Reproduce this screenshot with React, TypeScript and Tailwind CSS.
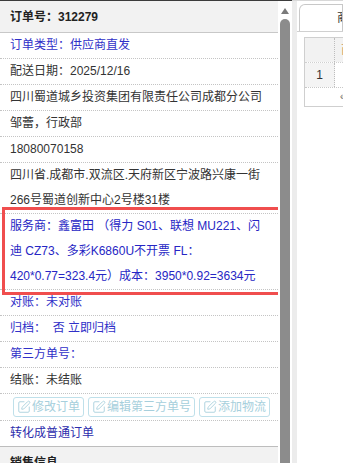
import { SquarePen } from 'lucide-react';

const rowCls = 'px-[10px] leading-[25px] border-b border-dotted border-[#c4c4c4]';

function EditButton({ label }: { label: string }) {
    return (
        <button
            disabled
            className="h-[20px] flex items-center gap-[1px] px-[3px] border border-[#bfe0ea] rounded-[3px] text-[#a6cfdc] bg-white text-[12px] leading-none"
        >
            <SquarePen size={14} strokeWidth={1.5} />
            {label}
        </button>
    );
}

export default function App() {
    return (
        <div className="w-[343px] h-[463px] overflow-hidden flex bg-white text-[12px] text-[#333] font-['Liberation_Sans','Noto_Sans_CJK_SC',sans-serif]">
            {/* order detail column + scrollbar */}
            <div className="w-[292px] shrink-0 flex border-t border-[#3c3c3c]">
                <div className="w-[278px] shrink-0 overflow-hidden">
                    <div className="h-[32px] px-[10px] flex items-center bg-[#f2f2f2] border-b border-[#c8c8c8] font-bold text-[#222]">
                        订单号：312279
                    </div>
                    <div className={`${rowCls} text-[#3030c8]`}>订单类型：供应商直发</div>
                    <div className={rowCls}>配送日期：2025/12/16</div>
                    <div className={rowCls}>四川蜀道城乡投资集团有限责任公司成都分公司</div>
                    <div className={rowCls}>邹蕾，行政部</div>
                    <div className={rowCls}>18080070158</div>
                    <div className={rowCls}>
                        四川省.成都市.双流区.天府新区宁波路兴康一街
                        <br />
                        266号蜀道创新中心2号楼31楼
                    </div>
                    <div className="relative">
                        <div className={`${rowCls} text-[#2626c4]`}>
                            服务商：鑫富田 （得力 S01、联想 MU221、闪
                            <br />
                            迪 CZ73、多彩K6860U不开票 FL：
                            <br />
                            420*0.77=323.4元）成本：3950*0.92=3634元
                        </div>
                        {/* highlight box drawn over the supplier row */}
                        <div className="absolute left-[2px] -right-[3px] -top-[7px] -bottom-[5px] border-[3px] border-[#f04e4e] pointer-events-none" />
                    </div>
                    <div className={`${rowCls} text-[#3030c8]`}>对账：未对账</div>
                    <div className={`${rowCls} text-[#3030c8] whitespace-pre`}>归档：  否 立即归档</div>
                    <div className={`${rowCls} text-[#3030c8]`}>第三方单号：</div>
                    <div className={rowCls}>结账：未结账</div>
                    <div className="flex gap-[4px] pl-[13px] pt-[3px] pb-[3px] border-b border-dotted border-[#c4c4c4]">
                        <EditButton label="修改订单" />
                        <EditButton label="编辑第三方单号" />
                        <EditButton label="添加物流" />
                    </div>
                    <div className="px-[10px] leading-[25px] text-[#2c2cac]">转化成普通订单</div>
                    <div className="h-[32px] px-[10px] flex items-center bg-[#f2f2f2] border-t border-[#bdbdbd] font-bold text-[#222]">
                        销售信息
                    </div>
                </div>
                <div className="w-[2px] shrink-0" />
                <div className="w-[10px] shrink-0 flex flex-col items-center">
                    <div className="mt-[7px] w-0 h-0 border-l-[4px] border-r-[4px] border-b-[6px] border-l-transparent border-r-transparent border-b-[#7a7a7a]" />
                    <div className="mt-[5px] w-[10px] flex-1 rounded-t-[5px] bg-[#8c8c8c]" />
                </div>
                <div className="w-[2px] shrink-0" />
            </div>

            <div className="w-[5px] shrink-0 bg-[#ececec] border-t border-[#d8d8d8]" />

            {/* right panel with product tab */}
            <div className="flex-1 min-w-0 flex flex-col border-t border-[#d8d8d8]">
                <div className="h-[31px] shrink-0 pt-[3px] pl-[2px] border-b border-[#d0d0d0] flex">
                    <div className="flex-1 border border-b-0 border-[#c8c8c8] rounded-tl-[6px] bg-white pl-[37px] leading-[26px] whitespace-nowrap overflow-hidden text-[#333]">
                        商品信息
                    </div>
                </div>
                <div className="mt-[5px] ml-[7px] shrink-0 border border-[#cfcfcf] border-r-0">
                    <div className="h-[24px] flex bg-[#f2f2f2]">
                        <div className="w-[30px] shrink-0 border-r border-dotted border-[#bdbdbd]" />
                        <div className="pl-[6px] leading-[24px] whitespace-nowrap text-[#c89a60]">商品</div>
                    </div>
                    <div className="h-[25px] flex border-t border-dotted border-[#d0d0d0]">
                        <div className="w-[30px] shrink-0 bg-[#f4f4f4] border-r border-dotted border-[#bdbdbd] flex items-center justify-center text-[#333]">
                            1
                        </div>
                        <div className="flex-1" />
                    </div>
                    <div className="h-[19px] border-t border-dotted border-[#c8c8c8] pl-[35px] leading-[18px] text-[10px] text-[#666]">
                        «
                    </div>
                </div>
            </div>
        </div>
    );
}
